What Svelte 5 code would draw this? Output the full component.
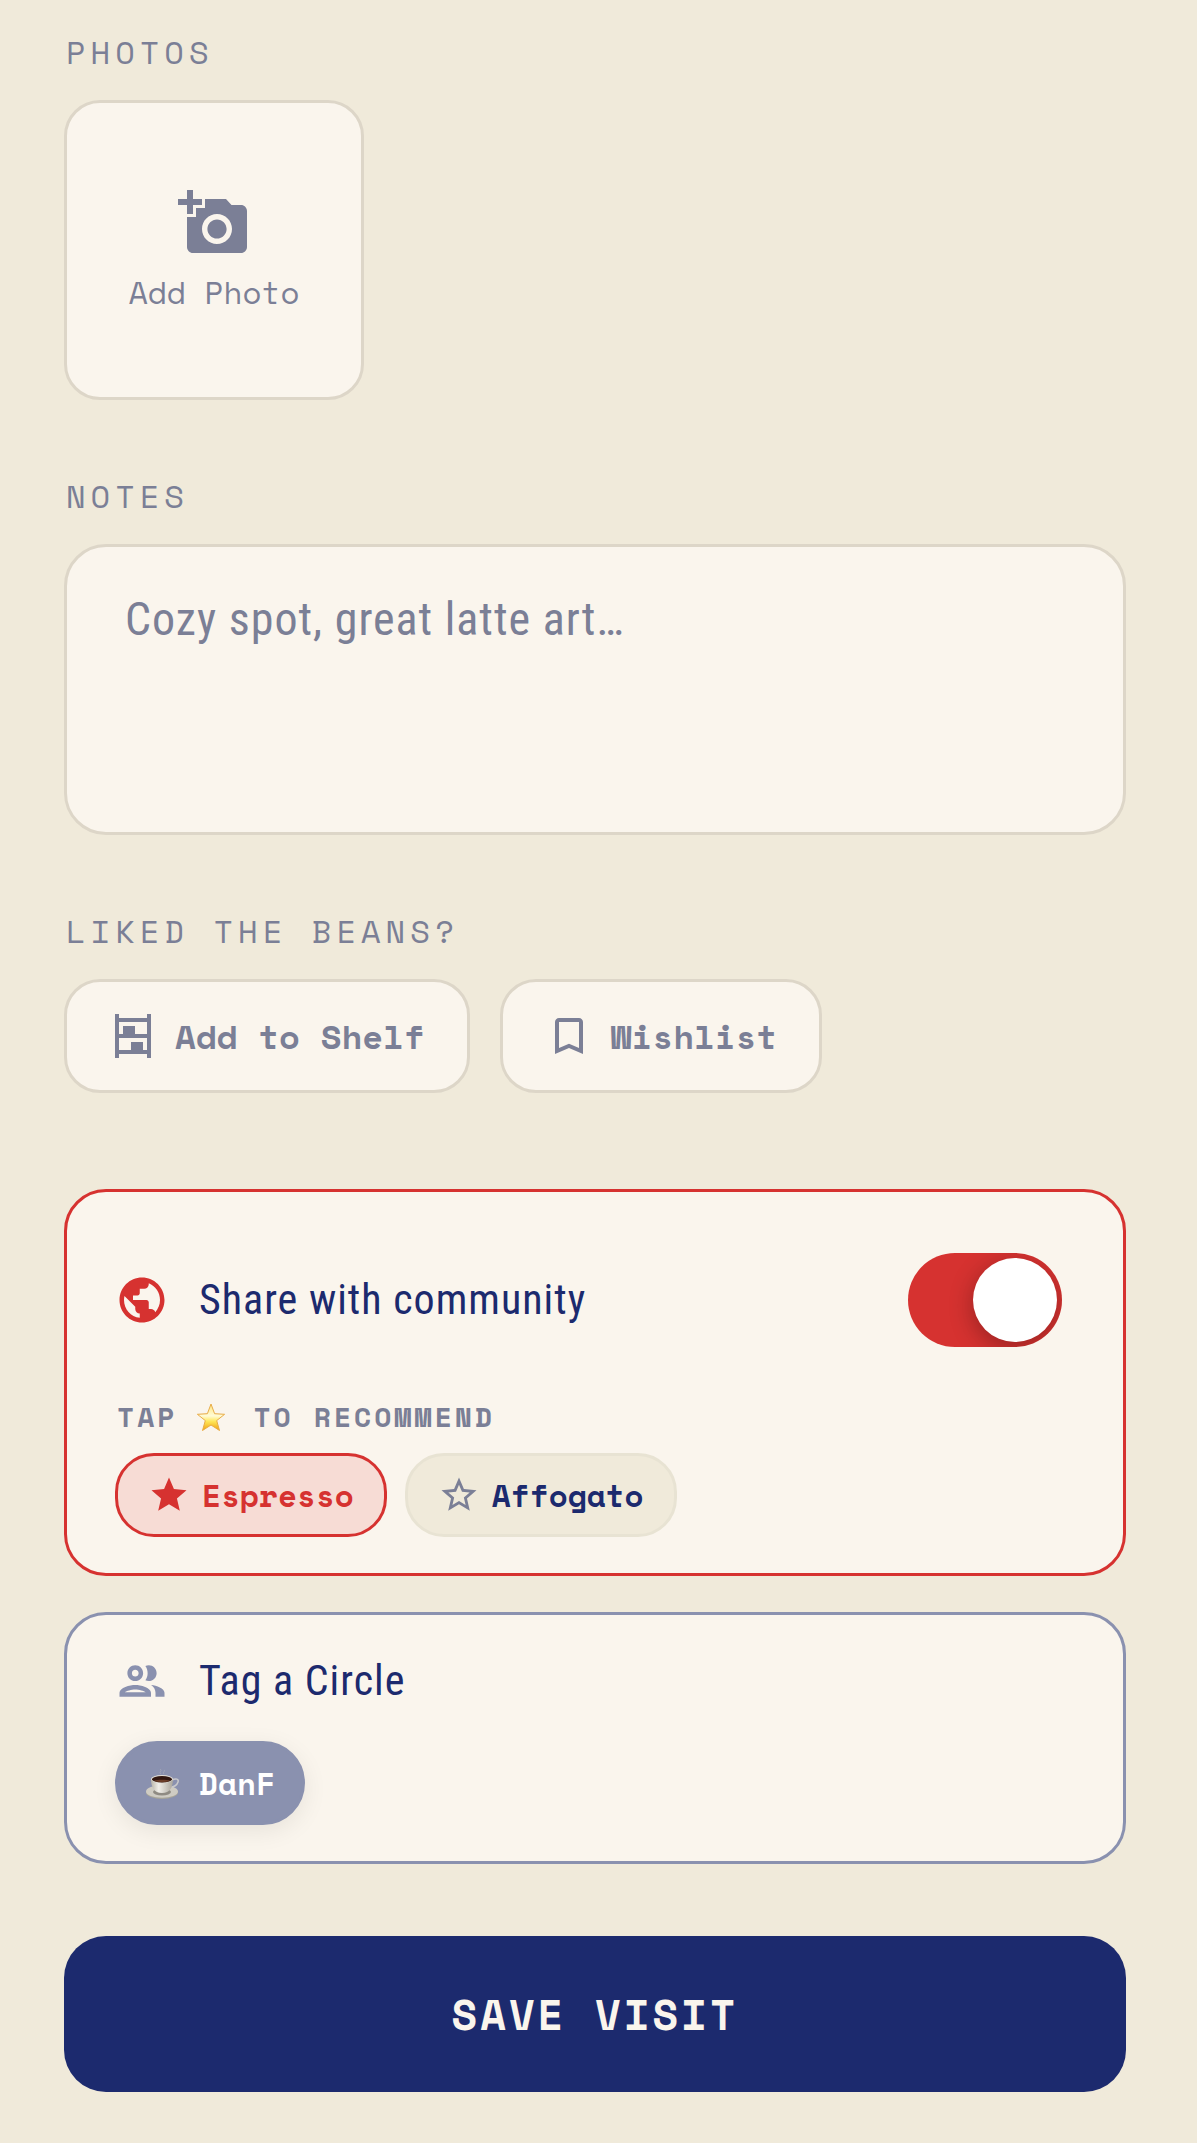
<script lang="ts">
  let notes = $state('');
  let onShelf = $state(false);
  let onWishlist = $state(false);
  let shareWithCommunity = $state(true);

  let drinks = $state([
    { name: 'Espresso', recommended: true },
    { name: 'Affogato', recommended: false }
  ]);

  let circles = $state([{ name: 'DanF', tagged: true }]);
</script>

<main class="visit-form">
  <section class="field">
    <h2 class="field-label">PHOTOS</h2>
    <button type="button" class="add-photo">
      <svg class="icon-xl" viewBox="0 0 24 24" aria-hidden="true">
        <path d="M3 4V1h2v3h3v2H5v3H3V6H0V4h3zm3 6V7h3V4h7l1.83 2H21c1.1 0 2 .9 2 2v12c0 1.1-.9 2-2 2H5c-1.1 0-2-.9-2-2V10h3zm7 9c2.76 0 5-2.24 5-5s-2.24-5-5-5-5 2.24-5 5 2.24 5 5 5zm-3.2-5c0 1.77 1.43 3.2 3.2 3.2s3.2-1.43 3.2-3.2-1.43-3.2-3.2-3.2-3.2 1.43-3.2 3.2z" />
      </svg>
      <span>Add Photo</span>
    </button>
  </section>

  <section class="field">
    <label class="field-label" for="notes">NOTES</label>
    <textarea id="notes" rows="3" placeholder="Cozy spot, great latte art…" bind:value={notes}></textarea>
  </section>

  <section class="field">
    <h2 class="field-label">LIKED THE BEANS?</h2>
    <div class="bean-actions">
      <button type="button" class="bean-button" aria-pressed={onShelf} onclick={() => (onShelf = !onShelf)}>
        <svg class="icon-md" viewBox="0 0 24 24" aria-hidden="true">
          <path d="M3 1h2v2h14V1h2v22h-2v-2H5v2H3V1zm2 4v6h2V7h6v4h6V5H5zm0 8v6h6v-4h6v4h2v-6H5z" />
        </svg>
        Add to Shelf
      </button>
      <button type="button" class="bean-button" aria-pressed={onWishlist} onclick={() => (onWishlist = !onWishlist)}>
        <svg class="icon-md" viewBox="0 0 24 24" aria-hidden="true">
          <path d="M17 3H7c-1.1 0-2 .9-2 2v16l7-3 7 3V5c0-1.1-.9-2-2-2zm0 15l-5-2.18L7 18V5h10v13z" />
        </svg>
        Wishlist
      </button>
    </div>
  </section>

  <section class="card share-card">
    <div class="card-head share-head">
      <svg class="icon-lg" viewBox="0 0 24 24" aria-hidden="true">
        <path d="M12 2C6.48 2 2 6.48 2 12s4.48 10 10 10 10-4.48 10-10S17.52 2 12 2zm-1 17.93c-3.95-.49-7-3.85-7-7.93 0-.62.08-1.21.21-1.79L9 15v1c0 1.1.9 2 2 2v1.93zm6.9-2.54c-.26-.81-1-1.39-1.9-1.39h-1v-3c0-.55-.45-1-1-1H8v-2h2c.55 0 1-.45 1-1V7h2c1.1 0 2-.9 2-2v-.41c2.93 1.19 5 4.06 5 7.41 0 2.08-.8 3.97-2.1 5.39z" />
      </svg>
      <label class="card-title" for="share">Share with community</label>
      <input id="share" class="toggle" type="checkbox" role="switch" bind:checked={shareWithCommunity} />
    </div>

    <p class="hint">
      TAP
      <svg class="star-emoji" viewBox="4 3 28 28" role="img" aria-label="star">
        <defs>
          <linearGradient id="star-fill" x1="0" y1="0" x2="0" y2="1">
            <stop offset="0" stop-color="#ffe680" />
            <stop offset="0.45" stop-color="#fffbd6" />
            <stop offset="0.65" stop-color="#ffe75a" />
            <stop offset="1" stop-color="#f0a010" />
          </linearGradient>
        </defs>
        <path
          d="M18 4l3.600 9.700 10 .6-7.900 6.300 2.800 9.900-8.500-5.500-8.500 5.500 2.800-9.900-7.900-6.300 10-.6z"
          fill="url(#star-fill)"
          stroke="#e8ac48"
          stroke-width="1"
          stroke-linejoin="round"
        />
      </svg>
      TO RECOMMEND
    </p>

    <div class="chips">
      {#each drinks as drink (drink.name)}
        <button
          type="button"
          class="chip"
          class:recommended={drink.recommended}
          aria-pressed={drink.recommended}
          onclick={() => (drink.recommended = !drink.recommended)}
        >
          <svg class="icon-sm" viewBox="0 0 24 24" aria-hidden="true">
            {#if drink.recommended}
              <path d="M12 17.270L18.180 21l-1.640-7.030L22 9.240l-7.190-.61L12 2 9.190 8.630 2 9.240l5.460 4.730L5.820 21z" />
            {:else}
              <path d="M22 9.240l-7.190-.62L12 2 9.190 8.630 2 9.240l5.460 4.730L5.820 21 12 17.270 18.180 21l-1.630-7.030L22 9.240zM12 15.400l-3.760 2.270 1-4.280-3.320-2.880 4.380-.38L12 6.100l1.710 4.040 4.380.38-3.320 2.880 1 4.280L12 15.400z" />
            {/if}
          </svg>
          {drink.name}
        </button>
      {/each}
    </div>
  </section>

  <section class="card circle-card">
    <div class="card-head">
      <svg class="icon-lg" viewBox="0 0 24 24" aria-hidden="true">
        <path d="M9 13.750c-2.340 0-7 1.170-7 3.500V19h14v-1.750c0-2.330-4.660-3.500-7-3.500zM4.340 17c.84-.58 2.870-1.250 4.660-1.250s3.820.67 4.660 1.250H4.340zM9 12c1.930 0 3.500-1.570 3.500-3.500S10.930 5 9 5 5.500 6.570 5.500 8.500 7.070 12 9 12zm0-5c.83 0 1.500.67 1.500 1.500S9.830 10 9 10s-1.500-.67-1.500-1.500S8.170 7 9 7zm7.040 6.810c1.160.84 1.960 1.960 1.960 3.440V19h4v-1.750c0-2.020-3.500-3.170-5.960-3.440zM15 12c1.930 0 3.500-1.570 3.500-3.500S16.930 5 15 5c-.54 0-1.040.13-1.500.35.63.89 1 1.980 1 3.150s-.37 2.260-1 3.150c.46.22.96.35 1.500.35z" />
      </svg>
      <h2 class="card-title">Tag a Circle</h2>
    </div>

    <div class="chips">
      {#each circles as circle (circle.name)}
        <button
          type="button"
          class="circle-chip"
          class:tagged={circle.tagged}
          aria-pressed={circle.tagged}
          onclick={() => (circle.tagged = !circle.tagged)}
        >
          <svg class="cup-emoji" viewBox="0 0 36 36" aria-hidden="true">
            <defs>
              <linearGradient id="cup-side" x1="0" y1="0" x2="1" y2="0">
                <stop offset="0" stop-color="#b9b5aa" />
                <stop offset="0.35" stop-color="#f1efe9" />
                <stop offset="1" stop-color="#aaa69c" />
              </linearGradient>
            </defs>
            <path d="M16 9c-3-2 2-3-1-5M19 9c-2-2 2-3 0-4" fill="none" stroke="#a2a6b8" stroke-width="1" />
            <ellipse cx="17" cy="27.500" rx="16" ry="6.500" fill="#a8a598" />
            <ellipse cx="17" cy="26.500" rx="16" ry="6.200" fill="#cfccc3" />
            <ellipse cx="17" cy="27" rx="9" ry="3.500" fill="#8f8b83" />
            <path d="M27 15c4-2 7-1 6 2s-4 5-8 5" fill="none" stroke="#c9c9cc" stroke-width="1.500" />
            <path d="M6 14c0 8 3 14 11 14s11-6 11-14z" fill="url(#cup-side)" />
            <ellipse cx="17" cy="14" rx="11" ry="4" fill="#e4e0d8" />
            <ellipse cx="17" cy="14.300" rx="10" ry="3.200" fill="#321811" />
            <path d="M9 15.500c3 2.200 13 2.200 16 0-3-1-13-1-16 0z" fill="#6b3d28" />
          </svg>
          {circle.name}
        </button>
      {/each}
    </div>
  </section>

  <button type="button" class="save-button">SAVE VISIT</button>
</main>

<style>
  :global(body) {
    background: #f0eada;
  }

  .visit-form {
    --paper: #faf5ed;
    --sand: #f0eada;
    --line: #ddd6c8;
    --muted: #7b7f96;
    --navy: #1c2a6e;
    --red: #d63230;
    --slate: #8a91af;
    --mono: 'Space Mono', 'Liberation Mono', monospace;
    --condensed: 'Roboto Condensed', 'Liberation Sans Narrow', Roboto, sans-serif;

    display: flex;
    flex-direction: column;
    padding: 28px 71px 51px 64px;
    background: var(--sand);
    color: var(--navy);
    font-family: var(--mono);
  }

  button,
  textarea,
  input {
    box-sizing: border-box;
    margin: 0;
    font-family: inherit;
  }

  button {
    cursor: pointer;
  }

  svg {
    flex: none;
    fill: currentColor;
  }

  .icon-sm {
    width: 42px;
    height: 42px;
  }

  .icon-md {
    width: 48px;
    height: 48px;
  }

  .icon-lg {
    width: 54px;
    height: 54px;
  }

  .icon-xl {
    width: 72px;
    height: 72px;
  }

  .field {
    display: flex;
    flex-direction: column;
    align-items: flex-start;
    gap: 24px;
    margin-bottom: 72px;
  }

  .field-label {
    margin: 0;
    padding-left: 2px;
    color: var(--muted);
    font-size: 32px;
    font-weight: 400;
    line-height: 48px;
    letter-spacing: 5px;
  }

  .add-photo {
    display: flex;
    flex-direction: column;
    align-items: center;
    justify-content: center;
    gap: 12px;
    width: 300px;
    aspect-ratio: 1;
    padding: 0;
    border: 3px solid var(--line);
    border-radius: 36px;
    background: var(--paper);
    color: var(--muted);
    font-size: 31px;
    line-height: 42px;
  }

  textarea {
    display: block;
    width: 100%;
    padding: 42px 58px 63px;
    border: 3px solid var(--line);
    border-radius: 42px;
    outline: none;
    resize: none;
    background: var(--paper);
    color: var(--navy);
    font-family: var(--condensed);
    font-size: 46px;
    line-height: 60px;
    letter-spacing: 1px;
  }

  textarea::placeholder {
    color: var(--muted);
    opacity: 1;
  }

  .bean-actions {
    display: flex;
    flex-wrap: wrap;
    gap: 30px;
  }

  .bean-button {
    display: flex;
    align-items: center;
    gap: 18px;
    padding: 30px 42px;
    border: 3px solid var(--line);
    border-radius: 36px;
    background: var(--paper);
    color: var(--muted);
    font-size: 34px;
    font-weight: 700;
    line-height: 48px;
  }

  .card {
    padding: 36px 48px;
    border: 3px solid;
    border-radius: 42px;
    background: var(--paper);
  }

  .share-card {
    margin-top: 24px;
    border-color: var(--red);
  }

  .circle-card {
    margin-top: 36px;
    border-color: var(--slate);
  }

  .card-head {
    display: flex;
    align-items: center;
    gap: 30px;
    margin-bottom: 30px;
  }

  .share-card .icon-lg {
    color: var(--red);
  }

  .circle-card .icon-lg {
    color: var(--slate);
  }

  .share-head {
    padding: 25px 13px 23px 0;
  }

  .card-title {
    flex: 1;
    margin: 0;
    color: var(--navy);
    font-family: var(--condensed);
    font-size: 42px;
    font-weight: 400;
    line-height: 60px;
    letter-spacing: 1px;
  }

  .toggle {
    flex: none;
    width: 154px;
    height: 94px;
    padding: 5px;
    appearance: none;
    border-radius: 47px;
    background: var(--line);
    overflow: hidden;
    cursor: pointer;
  }

  .toggle::before {
    content: '';
    display: block;
    width: 84px;
    height: 84px;
    border-radius: 50%;
    background: #fff;
    box-shadow: 0 6px 24px rgba(0, 0, 0, 0.3);
  }

  .toggle:checked {
    background: var(--red);
  }

  .toggle:checked::before {
    margin-left: auto;
  }

  .hint {
    display: flex;
    align-items: center;
    gap: 20px;
    margin: 0 0 19px;
    padding-left: 2px;
    color: var(--muted);
    font-size: 28px;
    font-weight: 700;
    line-height: 34px;
    letter-spacing: 3px;
  }

  .star-emoji {
    width: 28px;
    height: 28px;
    margin-right: 8px;
  }

  .chips {
    display: flex;
    flex-wrap: wrap;
    gap: 18px;
  }

  .chip,
  .circle-chip {
    display: flex;
    align-items: center;
    gap: 12px;
    padding: 18px 30px;
    border: 3px solid #e8e3d3;
    border-radius: 39px;
    background: var(--sand);
    color: var(--navy);
    font-size: 31px;
    font-weight: 700;
    line-height: 42px;
  }

  .chip .icon-sm {
    color: var(--muted);
  }

  .chip.recommended {
    border-color: var(--red);
    background: #f7dcd5;
    color: var(--red);
  }

  .chip.recommended .icon-sm {
    color: var(--red);
  }

  .circle-chip {
    gap: 18px;
    padding: 18px 27px;
  }

  .circle-chip.tagged {
    border-color: var(--slate);
    border-radius: 42px;
    background: var(--slate);
    color: #fff;
    box-shadow: 0 6px 24px rgba(0, 0, 0, 0.08);
  }

  .cup-emoji {
    width: 36px;
    height: 36px;
  }

  .save-button {
    margin-top: 72px;
    padding: 48px;
    border: 0;
    border-radius: 42px;
    background: var(--navy);
    color: var(--paper);
    font-size: 42px;
    font-weight: 700;
    line-height: 60px;
    letter-spacing: 3px;
  }
</style>
